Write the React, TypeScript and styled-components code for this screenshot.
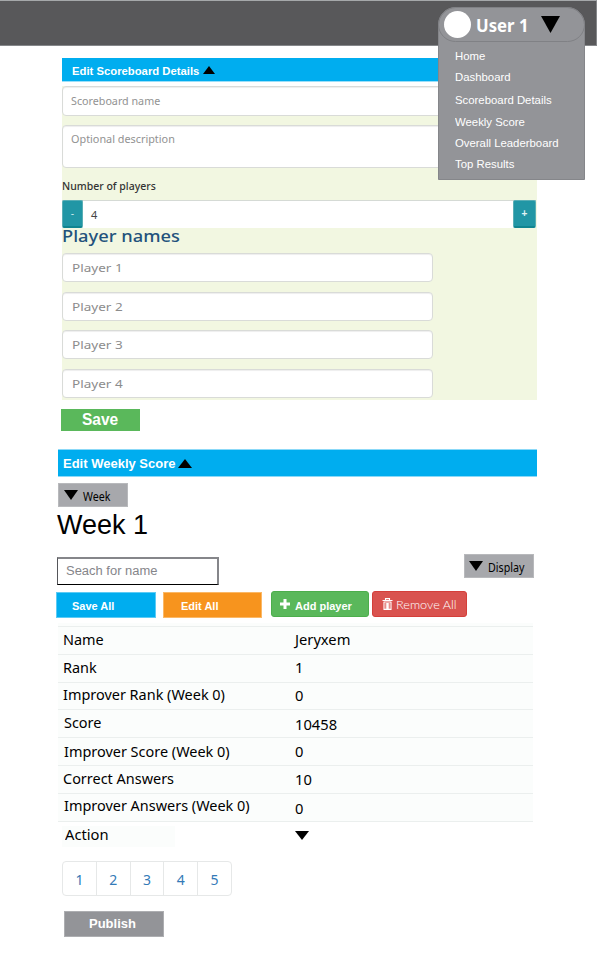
import React from 'react';
import styled, { createGlobalStyle, css } from 'styled-components';

const Global = createGlobalStyle`
  * { box-sizing: border-box; }
  body { margin: 0; background: #fff; font-family: "Liberation Sans", Arial, sans-serif; }
`;

const arial = '"Liberation Sans", Arial, sans-serif';
const humanist = '"Noto Sans", "Open Sans", sans-serif';

const Page = styled.div`
  position: relative;
  width: 597px;
  height: 956px;
  overflow: hidden;
  background: #fff;
`;

const Text = styled.span<{
  $size: number; $stretch?: number; $color?: string; $font?: string; $weight?: number; $drop?: number;
}>`
  display: block;
  flex: none;
  white-space: nowrap;
  line-height: 1;
  transform-origin: 0 50%;
  font-size: ${p => p.$size}px;
  font-family: ${p => p.$font || arial};
  font-weight: ${p => p.$weight || 400};
  color: ${p => p.$color || '#000'};
  transform: translateY(${p => p.$drop || 0}px) scaleX(${p => p.$stretch || 1});
`;

const TopBar = styled.header`
  height: 46px;
  background: #58585a;
  border: solid #85878a;
  border-width: 1px 1px 1px 0;
  border-top-color: #a5a8aa;
`;

const Menu = styled.nav`
  position: absolute;
  top: 7px;
  left: 438px;
  width: 147px;
  height: 173px;
  background: #939498;
  border: 1px solid #85868a;
  border-radius: 18px 18px 0 0;
`;

const MenuHead = styled.div`
  display: flex;
  align-items: center;
  height: 35px;
  margin: -1px;
  padding-left: 5px;
  border: 1px solid #808185;
  border-radius: 18px;
`;

const Avatar = styled.div`
  width: 27px;
  height: 27px;
  border-radius: 50%;
  background: #fff;
  margin-right: 5px;
`;

const MenuCaret = styled.svg`
  position: absolute;
  left: 102px;
  top: 8px;
`;

const MenuList = styled.div`
  display: grid;
  grid-template-rows: 20.5px 22.5px 22.5px 21.5px 21.5px 21px;
  padding: 5px 0 0 16px;
  align-items: center;
`;

const SectionBar = styled.div<{ $second?: boolean }>`
  display: flex;
  align-items: center;
  background: #00adef;
  ${p => p.$second
    ? css`margin: 18px 0 0 58px; width: 479px; height: 28px; padding-left: 5px; border: solid #8bd9f8; border-width: 1px 0;`
    : css`margin: 12px 0 0 62px; width: 475px; height: 24px; padding: 2px 0 0 10px; border-bottom: 1px solid #9bdff9;`}
`;

const BarCaret = styled.span<{ $gap: number; $lift: number }>`
  margin: 0 0 ${p => p.$lift}px ${p => p.$gap}px;
  line-height: 0;
`;

const Form = styled.form`
  display: flex;
  flex-direction: column;
  width: 475px;
  height: 314px;
  margin: 4px 0 0 62px;
  background: #f2f7e1;
`;

const Field = styled.div<{ $h: number; $w?: number; $gap?: number; $pad?: number }>`
  flex: none;
  width: ${p => p.$w || 475}px;
  height: ${p => p.$h}px;
  margin-bottom: ${p => p.$gap || 0}px;
  padding: 8px 0 0 ${p => p.$pad || 8}px;
  background: #fff;
  border: 1px solid #d9dbd8;
  border-radius: 4px;
  box-shadow: inset 0 1px 1px rgba(0, 0, 0, 0.07);
`;

const LabelRow = styled.div`
  flex: none;
  height: 32px;
  padding-top: 12px;
`;

const Stepper = styled.div`
  display: flex;
  flex: none;
  width: 474px;
  height: 28px;
  background: #fff;
  border-top: 1px solid #d5dad5;
`;

const Step = styled.div<{ $w: number }>`
  display: flex;
  align-items: center;
  justify-content: center;
  width: ${p => p.$w}px;
  height: 28px;
  margin-top: -1px;
  border: 1px solid #59aeb5;
  border-bottom: 2px solid #108590;
  border-radius: 2px;
  background: #2196a5;
`;

const StepValue = styled.div`
  flex: 1;
  padding: 8px 0 0 8px;
`;

const Heading = styled.div`
  flex: none;
  height: 25px;
  padding-top: 1px;
`;

const Block = styled.div<{
  $w: number; $h: number; $bg: string; $x?: number; $top?: number; $pad: number; $edge?: string; $r?: number; $gap?: number;
}>`
  display: flex;
  flex: none;
  align-items: center;
  gap: ${p => p.$gap || 0}px;
  width: ${p => p.$w}px;
  height: ${p => p.$h}px;
  margin: ${p => p.$top || 0}px 0 0 ${p => p.$x || 0}px;
  padding-left: ${p => p.$pad}px;
  background: ${p => p.$bg};
  border: ${p => (p.$edge ? `1px solid ${p.$edge}` : '0')};
  border-radius: ${p => p.$r || 0}px;
`;

const Title = styled.div`
  height: 50px;
  padding: 4px 0 0 57px;
`;

const Tools = styled.div`
  display: flex;
  align-items: flex-start;
  height: 35px;
  margin-left: 57px;
`;

const Search = styled.div`
  width: 162px;
  height: 28px;
  padding: 6px 0 0 8px;
  border: 1px solid #000;
  border-top: 2px solid #85868a;
  border-right: 2px solid #85868a;
  border-left-color: #55565a;
`;

const Actions = styled.div`
  display: flex;
  align-items: flex-start;
  height: 30px;
  margin: 0 0 0 56px;
`;

const Table = styled.div`
  width: 475px;
  margin: 1px 0 0 58px;
  padding-top: 3px;
  background: #fbfdfc;
`;

const TableRow = styled.div<{ $h: number }>`
  display: grid;
  grid-template-columns: 237px 1fr;
  height: ${p => p.$h}px;
  border-top: 1px solid #ebefee;
`;

const Cell = styled.div<{ $pad: number }>`
  padding: 5px 0 0 ${p => p.$pad}px;
`;

const ActionRow = styled.div`
  display: grid;
  grid-template-columns: 237px 1fr;
  width: 475px;
  height: 40px;
  margin-left: 58px;
  border-top: 1px solid #ebefee;
`;

const ActionCell = styled.div`
  width: 113px;
  height: 21px;
  margin: 4px 0 0 4px;
  padding: 1px 0 0 3px;
  background: #fbfdfc;
`;

const Pager = styled.div`
  display: flex;
  width: 170px;
  height: 35px;
  margin-left: 62px;
  border: 1px solid #e6e8e8;
  border-radius: 4px;
`;

const PageCell = styled.div`
  display: flex;
  flex: 1;
  align-items: center;
  justify-content: center;
  & + & { border-left: 1px solid #e6e8e8; }
`;

const Tri = ({ w, h, up }: { w: number; h: number; up?: boolean }) => (
  <svg width={w} height={h} viewBox="0 0 10 10" preserveAspectRatio="none">
    <path d={up ? 'M0 10H10L5 0Z' : 'M0 0H10L5 10Z'} fill="#000" />
  </svg>
);

const CaretSlot = styled.div`
  padding: 9px 0 0 0;
  line-height: 0;
`;

const Plus = () => (
  <svg width="10" height="10" viewBox="0 0 10 10">
    <path d="M3.5 0h3v3.5H10v3H6.500V10h-3V6.500H0v-3h3.500z" fill="#fff" />
  </svg>
);

const Trash = () => (
  <svg width="11" height="12" viewBox="0 0 11 12">
    <path d="M0.500 2.500h10M3.500 2V0.600h4V2M1.600 4h7.800M2 4v7.400h7V4M4.200 5v6M6.800 5v6M5.500 5v6" fill="none" stroke="#fff" strokeWidth="1.100" />
  </svg>
);

const menuItems = ['Home', 'Dashboard', 'Scoreboard Details', 'Weekly Score', 'Overall Leaderboard', 'Top Results'];

const rows: { label: string; value: string; h: number; pad: number; drop: number; vdrop: number }[] = [
  { label: 'Name', value: 'Jeryxem', h: 28, pad: 5, drop: 0, vdrop: 0 },
  { label: 'Rank', value: '1', h: 28, pad: 5, drop: 0, vdrop: 0 },
  { label: 'Improver Rank (Week 0)', value: '0', h: 27, pad: 5, drop: -1, vdrop: 0 },
  { label: 'Score', value: '10458', h: 28, pad: 6, drop: 0, vdrop: 2 },
  { label: 'Improver Score (Week 0)', value: '0', h: 28, pad: 6, drop: 1, vdrop: 1 },
  { label: 'Correct Answers', value: '10', h: 28, pad: 5, drop: 0, vdrop: 1 },
  { label: 'Improver Answers (Week 0)', value: '0', h: 28, pad: 6, drop: -1, vdrop: 2 },
];

export default function App() {
  return (
    <Page>
      <Global />
      <TopBar />
      <SectionBar>
        <Text $size={11} $weight={700} $stretch={1.026} $drop={1} $color="#fff">Edit Scoreboard Details</Text>
        <BarCaret $gap={7} $lift={2}><Tri w={12} h={8} up /></BarCaret>
      </SectionBar>
      <Form>
        <Field $h={30} $gap={9}><Text $size={11} $font={humanist} $stretch={0.975} $color="#929292">Scoreboard name</Text></Field>
        <Field $h={43}><Text $size={11} $font={humanist} $stretch={0.985} $drop={-1} $color="#929292">Optional description</Text></Field>
        <LabelRow><Text $size={11} $font={humanist} $stretch={0.955} $weight={500} $color="#333">Number of players</Text></LabelRow>
        <Stepper>
          <Step $w={21}><Text $size={10} $color="#cfeaed">-</Text></Step>
          <StepValue><Text $size={11} $font={humanist} $color="#444">4</Text></StepValue>
          <Step $w={23}><Text $size={10} $weight={700} $color="#e4f4f5">+</Text></Step>
        </Stepper>
        <Heading><Text $size={15.5} $font={humanist} $weight={500} $stretch={1.18} $color="#23527c">Player names</Text></Heading>
        {[1, 2, 3, 4].map(n => (
          <Field key={n} $h={29} $w={371} $gap={9.5} $pad={9}>
            <Text $size={11} $font={humanist} $stretch={1.23} $color="#8c8c8c">Player {n}</Text>
          </Field>
        ))}
      </Form>
      <Block $w={79} $h={22} $bg="#5ab85b" $x={61} $top={9} $pad={21}>
        <Text $size={16} $weight={700} $stretch={0.97} $color="#fff">Save</Text>
      </Block>
      <SectionBar $second>
        <Text $size={13} $weight={700} $color="#fff">Edit Weekly Score</Text>
        <BarCaret $gap={3} $lift={0}><Tri w={14} h={9} up /></BarCaret>
      </SectionBar>
      <Block $w={70} $h={24} $bg="#a7a8ac" $edge="#b8b9bc" $x={58} $top={6} $pad={5} $gap={5}>
        <Tri w={14} h={10} />
        <Text $size={12} $font={humanist} $stretch={0.89} $drop={2}>Week</Text>
      </Block>
      <Title><Text $size={27} $drop={1}>Week 1</Text></Title>
      <Tools>
        <Search><Text $size={12} $stretch={1.08} $color="#85858a">Seach for name</Text></Search>
        <Block $w={70} $h={24} $bg="#a7a8ac" $edge="#b8b9bc" $x={245} $top={-3} $pad={4} $gap={5}>
          <Tri w={14} h={10} />
          <Text $size={12} $font={humanist} $stretch={0.89} $drop={2}>Display</Text>
        </Block>
      </Tools>
      <Actions>
        <Block $w={100} $h={26} $bg="#00adef" $edge="#5ccbf5" $pad={15}>
          <Text $size={11} $weight={700} $drop={1} $color="#fff">Save All</Text>
        </Block>
        <Block $w={99} $h={26} $bg="#f7941e" $edge="#fbb866" $pad={17} $x={7}>
          <Text $size={11} $weight={700} $drop={1} $color="#fff">Edit All</Text>
        </Block>
        <Block $w={98} $h={26} $bg="#5ab85b" $edge="#4cae4c" $r={3} $pad={8} $x={9} $top={-1} $gap={5}>
          <Plus /><Text $size={11} $weight={700} $color="#fff" $drop={2}>Add player</Text>
        </Block>
        <Block $w={95} $h={26} $bg="#d9534f" $edge="#d43f3a" $r={3} $pad={9} $x={3} $top={-1} $gap={3}>
          <Trash /><Text $size={11.5} $font="Lato, sans-serif" $weight={300} $stretch={1.1} $drop={1} $color="#fff">Remove All</Text>
        </Block>
      </Actions>
      <Table>
        {rows.map(r => (
          <TableRow key={r.label} $h={r.h}>
            <Cell $pad={r.pad}><Text $size={15} $font={humanist} $drop={r.drop} $stretch={0.963}>{r.label}</Text></Cell>
            <Cell $pad={0}><Text $size={15} $font={humanist} $drop={r.vdrop} $stretch={0.98}>{r.value}</Text></Cell>
          </TableRow>
        ))}
      </Table>
      <ActionRow>
        <ActionCell><Text $size={15} $font={humanist} $stretch={0.98}>Action</Text></ActionCell>
        <CaretSlot><Tri w={14} h={9} /></CaretSlot>
      </ActionRow>
      <Pager>
        {[1, 2, 3, 4, 5].map(n => (
          <PageCell key={n}><Text $size={14} $font={humanist} $drop={1} $color="#337ab7">{n}</Text></PageCell>
        ))}
      </Pager>
      <Block $w={100} $h={26} $bg="#939498" $edge="#adaeb1" $x={64} $top={15} $pad={24}>
        <Text $size={13} $weight={700} $drop={-1} $color="#fff">Publish</Text>
      </Block>
      <Menu>
        <MenuHead>
          <Avatar />
          <Text $size={18} $font={humanist} $weight={700} $stretch={0.93} $color="#fff">User 1</Text>
        </MenuHead>
        <MenuCaret width="19" height="17" viewBox="0 0 19 17"><path d="M0 0H19L9.500 17Z" fill="#000" /></MenuCaret>
        <MenuList>
          {menuItems.map(t => <Text key={t} $size={11.5} $stretch={0.988} $color="#fff">{t}</Text>)}
        </MenuList>
      </Menu>
    </Page>
  );
}
